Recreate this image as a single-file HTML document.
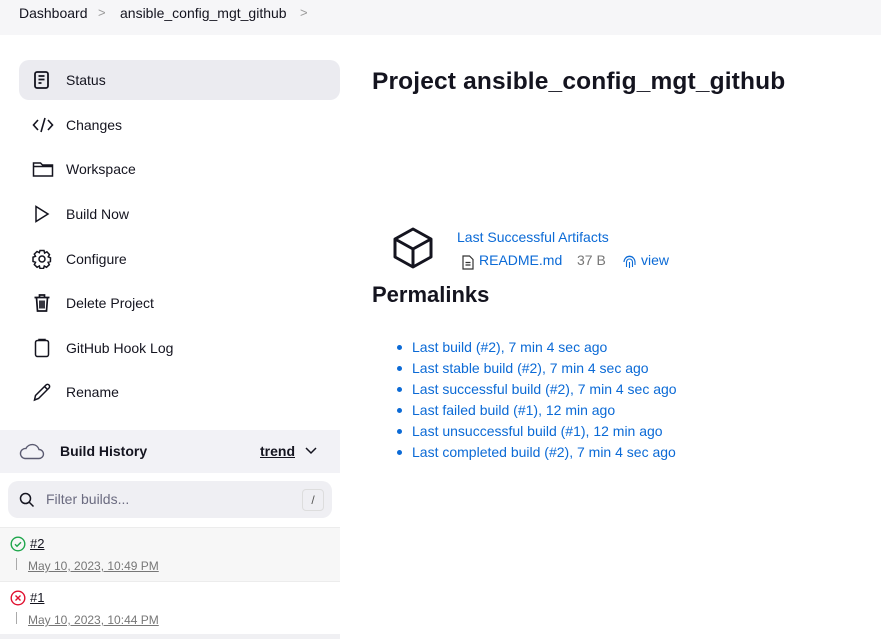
<!DOCTYPE html>
<html><head><meta charset="utf-8"><style>
*{margin:0;padding:0;box-sizing:border-box}
body{width:881px;height:639px;overflow:hidden;background:#fff;font-family:"Liberation Sans",sans-serif;color:#14141f;position:relative}
.bc{position:absolute;left:0;top:0;width:881px;height:35px;background:#f6f6f8;font-size:14px}
.bc span{position:absolute;top:5px}
.bc .sep{color:#999;font-size:13px}
.item{position:absolute;left:19px;width:321px;height:40px;font-size:14px}
.item.act{background:#ebebf0;border-radius:10px}
.item svg{position:absolute;left:13px;top:10px}
.item span{position:absolute;left:47px;top:12px}
a{color:#0b6ad6;text-decoration:none}
.bh{position:absolute;left:0;top:430px;width:340px;height:43px;background:#f2f2f6}
.filter{position:absolute;left:8px;top:481px;width:324px;height:37px;background:#efeff3;border-radius:10px}
.row{position:absolute;left:0;width:340px;height:54px}
.num{position:absolute;left:30px;top:8px;font-size:13px;text-decoration:underline;color:#14141f}
.date{position:absolute;left:28px;top:31px;font-size:12px;color:#777;text-decoration:underline}
.pipe{position:absolute;left:16px;top:30px;width:1px;height:12px;background:#aaa}
ul{position:absolute;left:412px;top:337px;list-style:none;font-size:14px;line-height:21px}
ul li{position:relative}
ul li:before{content:"";position:absolute;left-15px;left:-15px;top:8px;width:5px;height:5px;border-radius:50%;background:#0b6ad6}
</style></head><body>
<div class="bc"><span style="left:19px">Dashboard</span><span class="sep" style="left:98px">&gt;</span><span style="left:120px">ansible_config_mgt_github</span><span class="sep" style="left:300px">&gt;</span></div>

<div class="item act" style="top:60px"><svg width="20" height="20" viewBox="0 0 20 20" fill="none" stroke="#14141f" stroke-width="1.8"><rect x="3" y="2" width="13" height="16" rx="2"/><path d="M6.5 6h6M6.5 9.5h6M6.5 13h3"/></svg><span>Status</span></div>
<div class="item" style="top:105px"><svg width="22" height="20" viewBox="0 0 22 20" fill="none" stroke="#14141f" stroke-width="1.6"><path d="M6 5L1.5 10 6 15M16 5l4.5 5-4.5 5M13 3L9 17"/></svg><span>Changes</span></div>
<div class="item" style="top:149px"><svg width="22" height="20" viewBox="0 0 22 20" fill="none" stroke="#14141f" stroke-width="1.5"><path d="M1.5 4h7l2 2h10v11h-19z M1.5 7.5h19"/></svg><span>Workspace</span></div>
<div class="item" style="top:194px"><svg width="20" height="20" viewBox="0 0 20 20" fill="none" stroke="#14141f" stroke-width="1.5"><path d="M4 2.5v15l12-7.5z"/></svg><span>Build Now</span></div>
<div class="item" style="top:239px"><svg width="20" height="20" viewBox="0 0 20 20" fill="none" stroke="#14141f" stroke-width="1.5"><path d="M8 1.5h4l.6 2.5 2.3-1.2 2.6 2.8-1.3 2.2 2.3 1-.1 3.8-2.3.7 1.2 2.4-2.8 2.6-2.2-1.3-.8 2.5H8l-.6-2.5-2.3 1.3-2.8-2.7 1.2-2.3-2.5-.8V8.2l2.5-.9-1.2-2.2 2.7-2.6 2.3 1.2z"/><circle cx="10" cy="10" r="3"/></svg><span>Configure</span></div>
<div class="item" style="top:283px"><svg width="20" height="20" viewBox="0 0 20 20" fill="none" stroke="#14141f" stroke-width="1.7"><path d="M2.5 4.5h15M7.5 4.5V2h5v2.5M4.5 4.5l1 13.5h9l1-13.5M8 7.5v8M10 7.5v8M12 7.5v8"/></svg><span>Delete Project</span></div>
<div class="item" style="top:328px"><svg width="20" height="20" viewBox="0 0 20 20" fill="none" stroke="#14141f" stroke-width="1.5"><rect x="3.5" y="2.5" width="13" height="16" rx="2"/><path d="M7 2.5v-1h6v1"/></svg><span>GitHub Hook Log</span></div>
<div class="item" style="top:372px"><svg width="20" height="20" viewBox="0 0 20 20" fill="none" stroke="#14141f" stroke-width="1.5"><path d="M2.5 18l1-4.5L14 3a2 2 0 013 3L6.5 16.5z M12.5 4.5l3 3"/></svg><span>Rename</span></div>

<div class="bh"><svg style="position:absolute;left:19px;top:12px" width="26" height="18" viewBox="0 0 26 18" fill="none" stroke="#5a5a70" stroke-width="1.4"><path d="M6 16.5h14a4.5 4.5 0 000-9 7 7 0 00-13-1A5 5 0 006 16.5z"/></svg><span style="position:absolute;left:60px;top:13px;font-size:14px;font-weight:bold">Build History</span><span style="position:absolute;left:260px;top:13px;font-size:14px;font-weight:bold;text-decoration:underline">trend</span><svg style="position:absolute;left:305px;top:17px" width="12" height="8" viewBox="0 0 12 8" fill="none" stroke="#14141f" stroke-width="1.5"><path d="M1 1l5 5 5-5"/></svg></div>
<div class="filter"><svg style="position:absolute;left:11px;top:11px" width="16" height="16" viewBox="0 0 16 16" fill="none" stroke="#14141f" stroke-width="1.5"><circle cx="6.5" cy="6.5" r="5"/><path d="M10 10l4.5 4.5"/></svg><span style="position:absolute;left:38px;top:10px;font-size:14px;color:#6b6b80">Filter builds...</span><span style="position:absolute;left:294px;top:8px;width:22px;height:22px;border:1px solid #ddd;border-radius:4px;font-size:12px;text-align:center;line-height:20px;color:#555">/</span></div>

<div class="row" style="top:527px;background:#f7f7f7;border-top:1px solid #ececec"><svg style="position:absolute;left:10px;top:8px" width="16" height="16" viewBox="0 0 16 16" fill="none" stroke="#1ea64b" stroke-width="1.4"><circle cx="8" cy="8" r="6.8"/><path d="M5 8.2l2 2 4-4"/></svg><span class="num">#2</span><div class="pipe"></div><span class="date">May 10, 2023, 10:49 PM</span></div>
<div class="row" style="top:581px;border-top:1px solid #ececec"><svg style="position:absolute;left:10px;top:8px" width="16" height="16" viewBox="0 0 16 16" fill="none" stroke="#e0102f" stroke-width="1.4"><circle cx="8" cy="8" r="6.8"/><path d="M5.5 5.5l5 5M10.5 5.5l-5 5"/></svg><span class="num">#1</span><div class="pipe"></div><span class="date">May 10, 2023, 10:44 PM</span></div>
<div style="position:absolute;left:0;top:634px;width:340px;height:5px;background:#f0f0f3"></div>

<div style="position:absolute;left:372px;top:68px;font-size:24.5px;font-weight:bold;letter-spacing:0.15px">Project ansible_config_mgt_github</div>
<svg style="position:absolute;left:391px;top:226px" width="44" height="44" viewBox="0 0 44 44" fill="none" stroke="#14141f" stroke-width="3" stroke-linejoin="round"><path d="M22 3l18 10v18L22 41 4 31V13z M4 13l18 10 18-10 M22 23v18"/></svg>
<a style="position:absolute;left:457px;top:229px;font-size:14px">Last Successful Artifacts</a>
<svg style="position:absolute;left:462px;top:255px" width="12" height="15" viewBox="0 0 12 15" fill="none" stroke="#333" stroke-width="1.2"><path d="M1 1h6.5L11 4.5V14H1z M3.5 7.5h5M3.5 10h5"/></svg>
<a style="position:absolute;left:479px;top:252px;font-size:14px">README.md</a>
<span style="position:absolute;left:577px;top:252px;font-size:14px;color:#777">37 B</span>
<svg style="position:absolute;left:623px;top:254px" width="13" height="15" viewBox="0 0 13 15" fill="none" stroke="#0b6ad6" stroke-width="1.1"><path d="M2 5a5 5 0 019 0M1 8a5.5 5.5 0 0111 0v3M3.5 13V8a3 3 0 016 0v5M6.5 8v6"/></svg>
<a style="position:absolute;left:641px;top:252px;font-size:14px">view</a>
<div style="position:absolute;left:372px;top:282px;font-size:22px;font-weight:bold">Permalinks</div>
<ul>
<li><a>Last build (#2), 7 min 4 sec ago</a></li>
<li><a>Last stable build (#2), 7 min 4 sec ago</a></li>
<li><a>Last successful build (#2), 7 min 4 sec ago</a></li>
<li><a>Last failed build (#1), 12 min ago</a></li>
<li><a>Last unsuccessful build (#1), 12 min ago</a></li>
<li><a>Last completed build (#2), 7 min 4 sec ago</a></li>
</ul>
</body></html>
